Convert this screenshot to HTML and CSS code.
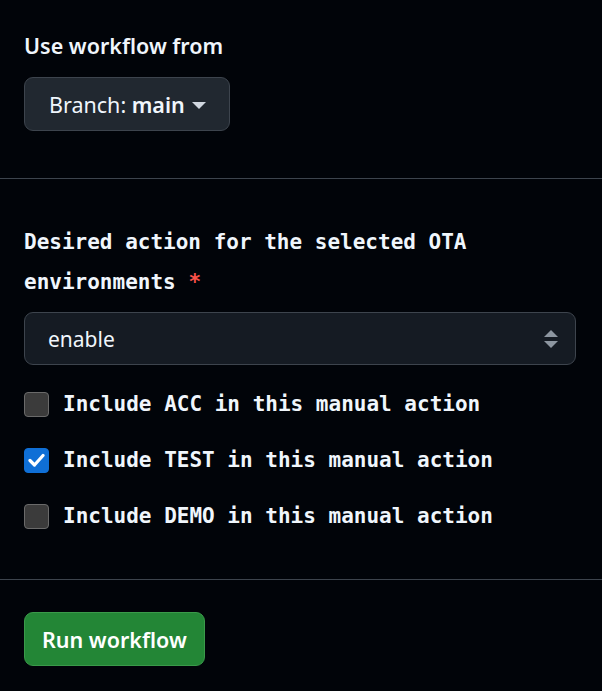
FILE: index.html
```html
<!DOCTYPE html>
<html lang="en">
<head>
    <meta charset="UTF-8">
    <meta name="viewport" content="width=device-width, initial-scale=1.0">
    <title>Run workflow</title>
    <link rel="stylesheet" href="styles.css">
</head>
<body>
    <div id="panel">
        <div class="block top">
            <div class="title">Use workflow from</div>
            <button class="branch" type="button">
                <span>Branch: <strong>main</strong></span>
                <span class="caret"></span>
            </button>
        </div>

        <div class="divider"></div>

        <form class="block inputs">
            <label class="field-label" for="action">Desired action for the selected OTA environments <span class="req">*</span></label>
            <div class="select-wrap">
                <select id="action">
                    <option>enable</option>
                    <option>disable</option>
                </select>
                <svg class="arrows" width="14" height="18" viewBox="0 0 14 18">
                    <path d="M7 0 L14 7 L0 7 Z" fill="#8d96a0"/>
                    <path d="M0 11 L14 11 L7 18 Z" fill="#8d96a0"/>
                </svg>
            </div>

            <label class="check">
                <span class="box"></span>
                <span>Include ACC in this manual action</span>
            </label>
            <label class="check">
                <span class="box checked">
                    <svg width="17" height="14" viewBox="0 0 17 14">
                        <path d="M2 7.5 L6.5 12 L15 2.5" fill="none" stroke="#fff" stroke-width="3.2" stroke-linecap="round" stroke-linejoin="round"/>
                    </svg>
                </span>
                <span>Include TEST in this manual action</span>
            </label>
            <label class="check">
                <span class="box"></span>
                <span>Include DEMO in this manual action</span>
            </label>
        </form>

        <div class="divider"></div>

        <div class="block bottom">
            <button class="run" type="button">Run workflow</button>
        </div>
    </div>
</body>
</html>
```

FILE: styles.css
```css
body {
    margin: 0;
    background: #010409;
    color: #f0f6fc;
    font-family: "Noto Sans", "Open Sans", sans-serif;
}

#panel {
    width: 602px;
}

.block {
    padding: 0 26px 0 24px;
}

.top {
    padding-top: 31px;
    padding-bottom: 47px;
}

.title {
    font-size: 21.5px;
    font-weight: 600;
    line-height: 30px;
    margin-bottom: 16px;
}

.branch {
    display: flex;
    align-items: center;
    gap: 7px;
    height: 54px;
    padding: 0 23px 0 24px;
    background: #212830;
    border: 1px solid #3d444d;
    border-radius: 9px;
    color: #f0f6fc;
    font-family: inherit;
    font-size: 21.5px;
}

.branch strong {
    font-weight: 600;
}

.caret {
    width: 0;
    height: 0;
    border-left: 7px solid transparent;
    border-right: 7px solid transparent;
    border-top: 7px solid #d1d7e0;
    margin-top: 2px;
}

.divider {
    height: 1px;
    background: #3d444d;
}

.inputs {
    display: flex;
    flex-direction: column;
    padding-top: 43px;
    padding-bottom: 47px;
}

.field-label {
    font-family: "DejaVu Sans Mono", "Liberation Mono", monospace;
    font-weight: bold;
    font-size: 21px;
    line-height: 40px;
    margin-bottom: 10px;
}

.req {
    color: #f85149;
}

.select-wrap {
    position: relative;
    margin-bottom: 23px;
}

select {
    display: block;
    width: 100%;
    height: 53px;
    padding: 0 23px;
    background: #151b23;
    border: 1px solid #3d444d;
    border-radius: 9px;
    color: #f0f6fc;
    font-family: "Noto Sans", sans-serif;
    font-size: 21px;
    appearance: none;
}

.arrows {
    position: absolute;
    right: 18px;
    top: 18px;
}

.check {
    display: flex;
    align-items: center;
    gap: 14px;
    height: 32px;
    margin-bottom: 24px;
    font-family: "DejaVu Sans Mono", "Liberation Mono", monospace;
    font-weight: bold;
    font-size: 21px;
}

.check:last-child {
    margin-bottom: 0;
}

.box {
    display: flex;
    align-items: center;
    justify-content: center;
    box-sizing: border-box;
    width: 25px;
    height: 25px;
    background: #3b3b3b;
    border: 1.5px solid #6a6a6a;
    border-radius: 4px;
    flex-shrink: 0;
}

.box.checked {
    background: #0f6fd6;
    border-color: #0f6fd6;
}

.bottom {
    padding-top: 32px;
    padding-bottom: 26px;
}

.run {
    height: 54px;
    padding: 0 17px;
    background: #238636;
    border: 1px solid #3a9a4a;
    border-radius: 9px;
    color: #fff;
    font-family: "Noto Sans", sans-serif;
    font-size: 21.5px;
    font-weight: 600;
}
```
